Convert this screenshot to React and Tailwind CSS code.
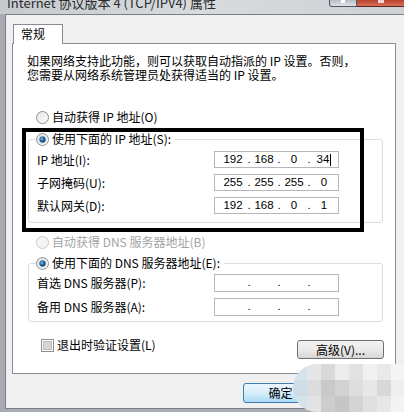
import React from 'react';

const font = { fontFamily: '"Noto Sans CJK SC", "Liberation Sans", sans-serif' };

const Radio = ({ checked, disabled }) => (
  <svg width="13" height="13" viewBox="0 0 13 13" className="shrink-0">
    <defs>
      <linearGradient id="rbg" x1="0" y1="0" x2="1" y2="1">
        <stop offset="0" stopColor="#e4e4e4" />
        <stop offset="1" stopColor="#ffffff" />
      </linearGradient>
      <radialGradient id="rdot" cx="0.4" cy="0.4" r="0.6">
        <stop offset="0" stopColor="#7fc4f0" />
        <stop offset="0.5" stopColor="#2a6fa8" />
        <stop offset="1" stopColor="#10375c" />
      </radialGradient>
    </defs>
    <circle cx="6.5" cy="6.5" r="6" fill={disabled ? '#f4f4f4' : 'url(#rbg)'} stroke={disabled ? '#c9c9c9' : '#8d8f91'} />
    {checked && <circle cx="6.5" cy="6.5" r="4" fill="#bcd9ee" />}
    {checked && <circle cx="6.5" cy="6.5" r="3" fill="url(#rdot)" />}
  </svg>
);

const Checkbox = () => (
  <svg width="13" height="13" viewBox="0 0 13 13" className="shrink-0">
    <rect x="0.5" y="0.5" width="12" height="12" fill="#fff" stroke="#8f8f8f" />
    <rect x="2.5" y="2.5" width="8" height="8" fill="#d6d6d6" stroke="#b9b9b9" />
  </svg>
);

const IpField = ({ parts, h, cursor }) => (
  <div
    className={`w-[125px] ${h} border border-[#b4b8bd] bg-white flex items-center pl-[4px] text-[11.5px] text-black`}
    style={{ fontFamily: '"Liberation Sans", sans-serif' }}
  >
    <span className="w-[28px] text-center">{parts[0]}</span>
    <span className="w-[4px] text-center">.</span>
    <span className="w-[26px] text-center">{parts[1]}</span>
    <span className="w-[4px] text-center">.</span>
    <span className="w-[26px] text-center">{parts[2]}</span>
    <span className="w-[4px] text-center">.</span>
    <span className="w-[26px] text-center relative">
      {parts[3]}
      {cursor && <span className="inline-block w-px h-[12px] bg-black align-middle ml-[1px]" />}
    </span>
  </div>
);

const Row = ({ label, h, children }) => (
  <div className={`flex items-center ${h}`}>
    <span className="ml-[1px] w-[177px] text-[12px] text-black whitespace-nowrap">{label}</span>
    {children}
  </div>
);

const blobCells = [
  '#d7e3ea', '#e6e6e6', '#d9d9d9', '#ececec', '#e2e2e2', '#f1f1f1', '#e9e9e9', '#f5f5f5',
  '#cfdde6', '#dcdcdc', '#c9c9c9', '#d2d2d2', '#dedede', '#e8e8e8', '#d8d8d8', '#efefef',
  '#d6e2e9', '#e3e3e3', '#cdcdcd', '#c6c6c6', '#d4d4d4', '#e0e0e0', '#e7e7e7', '#f3f3f3',
];

export default function App() {
  return (
    <div className="w-[404px] h-[412px] relative overflow-hidden bg-[#a9adb2]" style={font}>
      {/* title bar */}
      <div className="h-[14px] pl-[7px] overflow-hidden bg-gradient-to-r from-[#c6cacf] via-[#d8dbde] to-[#cdd1d5]">
        <div className="text-[13px] leading-[14px] -mt-[4px] text-[#2a2a2a] whitespace-nowrap">
          Internet 协议版本 4 (TCP/IPV4) 属性
        </div>
      </div>
      <div className="absolute top-0 left-[329px] flex">
        <div className="w-[28px] h-[7px] border border-t-0 border-[#4f565e] rounded-bl-[3px] bg-gradient-to-b from-[#b7bec6] to-[#dfe3e7] flex justify-center">
          <div className="w-[4px] h-[3px] bg-white" />
        </div>
        <div className="w-[48px] h-[7px] border border-t-0 border-l-0 border-[#5a2a22] bg-gradient-to-b from-[#b8412c] to-[#d8705b] flex justify-center">
          <div className="w-[6px] h-[3px] bg-[#f3d6d0]" />
        </div>
      </div>

      {/* window body */}
      <div className="ml-[5px] h-[395px] bg-[#f0f0f0] border-t border-l border-b border-[#7b7e83] pt-[9px] pl-[6px]">
        {/* tab */}
        <div className="ml-[1px] w-[50px] h-[20px] -mb-px relative z-10 bg-white border border-b-0 border-[#898c95] pl-[7px] pt-[1px] text-[12px] leading-[16px] text-black">
          常规
        </div>
        {/* tab panel */}
        <div className="w-[384px] h-[331px] border border-[#898c95] bg-white">
          <p className="mt-[10px] ml-[14px] text-[12px] leading-[14px] text-black whitespace-nowrap">
            如果网络支持此功能，则可以获取自动指派的 IP 设置。否则，
            <br />
            您需要从网络系统管理员处获得适当的 IP 设置。
          </p>

          <div className="mt-[28px] ml-[23px] h-[14px] flex items-center gap-[3px] text-[12px] text-black">
            <Radio />
            <span>自动获得 IP 地址(O)</span>
          </div>

          <fieldset className="mt-[8px] ml-[15px] w-[355px] border border-[#d5dfe5] rounded-[3px] pl-[7px] pb-[8px]">
            <legend className="h-[14px] flex items-center gap-[3px] pr-[4px] text-[12px] text-black">
              <Radio checked />
              <span>使用下面的 IP 地址(S):</span>
            </legend>
            <div className="pt-[5px] flex flex-col gap-[6px]">
              <Row label="IP 地址(I):" h="h-[17px]">
                <IpField parts={['192', '168', '0', '34']} h="h-[17px]" cursor />
              </Row>
              <Row label="子网掩码(U):" h="h-[17px]">
                <IpField parts={['255', '255', '255', '0']} h="h-[17px]" />
              </Row>
              <Row label="默认网关(D):" h="h-[17px]">
                <IpField parts={['192', '168', '0', '1']} h="h-[17px]" />
              </Row>
            </div>
          </fieldset>

          <div className="mt-[12px] ml-[23px] h-[14px] flex items-center gap-[3px] text-[12px] text-[#a3a3a3]">
            <Radio disabled />
            <span>自动获得 DNS 服务器地址(B)</span>
          </div>

          <fieldset className="mt-[7px] ml-[15px] w-[355px] border border-[#d5dfe5] rounded-[3px] pl-[7px] pb-[5px]">
            <legend className="h-[14px] flex items-center gap-[3px] pr-[4px] text-[12px] text-black">
              <Radio checked />
              <span>使用下面的 DNS 服务器地址(E):</span>
            </legend>
            <div className="pt-[4px] flex flex-col gap-[6px]">
              <Row label="首选 DNS 服务器(P):" h="h-[18px]">
                <IpField parts={['', '', '', '']} h="h-[18px]" />
              </Row>
              <Row label="备用 DNS 服务器(A):" h="h-[18px]">
                <IpField parts={['', '', '', '']} h="h-[18px]" />
              </Row>
            </div>
          </fieldset>

          <div className="mt-[16px] flex items-start justify-between pl-[28px] pr-[11px]">
            <div className="h-[14px] flex items-center gap-[3px] text-[12px] text-black">
              <Checkbox />
              <span>退出时验证设置(L)</span>
            </div>
            <div className="mt-[2px] w-[87px] h-[19px] rounded-[3px] border border-[#707070] bg-gradient-to-b from-[#f2f2f2] via-[#ebebeb] to-[#d6d6d6] flex items-center justify-center text-[12px] text-black">
              高级(V)...
            </div>
          </div>
        </div>

        {/* dialog buttons */}
        <div className="mt-[9px] ml-[231px] flex gap-[6px]">
          <div className="w-[75px] h-[20px] rounded-[3px] border border-[#3c7fb1] bg-gradient-to-b from-[#eaf6fd] via-[#d7eefb] to-[#a9d9f4] flex items-center justify-center text-[12px] text-black">
            确定
          </div>
          <div className="w-[75px] h-[20px] rounded-[3px] border border-[#707070] bg-gradient-to-b from-[#f2f2f2] to-[#d6d6d6]" />
        </div>
      </div>

      {/* black annotation frame drawn over the IP group */}
      <div className="absolute left-[22px] top-[128px] w-[342px] h-[104px] border-[4px] border-black pointer-events-none" />

      {/* pixelated watermark */}
      <div className="absolute left-[293px] top-[364px] w-[112px] h-[48px] rounded-l-[26px] overflow-hidden grid grid-cols-8 grid-rows-3">
        {blobCells.map((c, i) => (
          <div key={i} style={{ backgroundColor: c }} />
        ))}
      </div>
    </div>
  );
}
